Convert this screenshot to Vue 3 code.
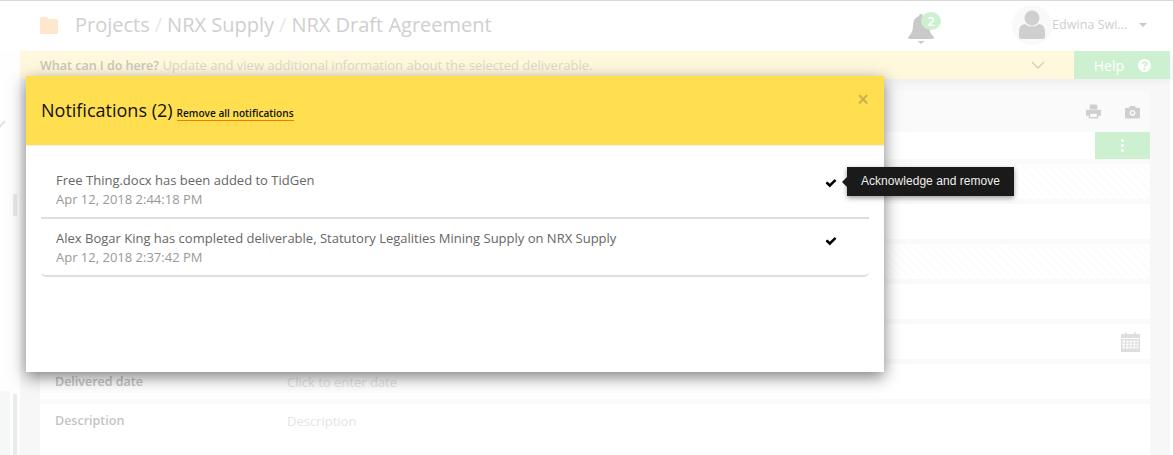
<template>
  <div class="page">
    <header class="topbar">
      <div class="crumbs">
        <svg class="folder" viewBox="0 0 18 18"><path d="M0 3 Q0 1 2 1 H6 Q8 1 8 3 H16 Q18 3 18 5 V18 H0 Z" /></svg>
        <span>Projects</span><i>/</i><span>NRX Supply</span><i>/</i><span>NRX Draft Agreement</span>
      </div>
      <div class="bell">
        <svg viewBox="0 0 28 32" width="28" height="32">
          <path d="M14 1 Q16 1 16 3 Q22 5 22 13 Q22 20 27 24 Q27 26 25 26 H3 Q1 26 1 24 Q6 20 6 13 Q6 5 12 3 Q12 1 14 1 Z" />
          <path d="M10.500 28 H17.500 L14 31 Z" />
        </svg>
        <span class="count">2</span>
      </div>
      <div class="user">
        <span class="avatar">
          <svg viewBox="0 0 26 30" width="26" height="30"><circle cx="13" cy="8" r="7.500" /><path d="M0 27 V21 Q0 15 6 14 Q13 19 20 14 Q26 15 26 21 V27 Q26 29 23 29 H3 Q0 29 0 27 Z" /></svg>
        </span>
        <span class="name">Edwina Swi...</span>
        <span class="caret"></span>
      </div>
    </header>

    <div class="main">
      <aside class="side">
        <span class="side-chevron"></span>
        <span class="thumb thumb-a"></span>
        <div class="side-foot"><span class="thumb thumb-b"></span></div>
      </aside>
      <div class="work">
        <div class="helpbar">
          <div class="hint">
            <p><b>What can I do here?</b> Update and view additional information about the selected deliverable.</p>
            <svg viewBox="0 0 14 8" width="14" height="8"><path d="M1 1 L7 7 L13 1" /></svg>
          </div>
          <div class="help">
            Help
            <svg viewBox="0 0 1536 1536" width="13" height="13"><path d="M896 1248v-192q0-14-9-23t-23-9H672q-14 0-23 9t-9 23v192q0 14 9 23t23 9h192q14 0 23-9t9-23zm256-672q0-88-55.500-163T958 297t-170-41q-243 0-371 213-15 24 8 42l132 100q7 6 19 6 16 0 25-12 53-68 86-92 34-24 86-24 48 0 85.500 26t37.500 59q0 38-20 61t-68 45q-63 28-115.500 86.500T640 829v36q0 14 9 23t23 9h192q14 0 23-9t9-23q0-19 21.500-49.500T972 766q32-18 49-28.500t46-35 44.500-48 28-60.500 12.500-81zm384 192q0 209-103 385.500T1153.500 1433 768 1536t-385.500-103T103 1153.500 0 768t103-385.500T382.500 103 768 0t385.500 103T1433 382.500 1536 768z" /></svg>
          </div>
        </div>
        <section class="panel">
          <div class="tools">
            <svg viewBox="0 0 16 15" width="15" height="15"><path d="M4 0 H11 L12 1 V5 H4 Z M1 5.500 H15 Q16 5.500 16 7 V12 H13 V15 H3 V12 H0 V7 Q0 5.500 1 5.500 Z" /><path class="hole" d="M4.500 10 H11.500 V13.500 H4.500 Z" /></svg>
            <svg viewBox="0 0 16 14" width="15" height="14"><path d="M1.500 2.500 H4.500 L5.500 0.500 H10.500 L11.500 2.500 H14.500 Q16 2.500 16 4 V12.500 Q16 14 14.500 14 H1.500 Q0 14 0 12.500 V4 Q0 2.500 1.500 2.500 Z" /><circle class="hole" cx="8" cy="8" r="3" /><circle cx="8" cy="8" r="1.500" /></svg>
          </div>
          <div class="actions">
            <span class="more"><i></i><i></i><i></i></span>
          </div>
          <div class="rows">
            <div v-for="row in rows" :key="row.id" class="row" :class="{ striped: row.striped }">
              <span class="label">{{ row.label }}</span>
              <span class="value">{{ row.value }}</span>
              <svg v-if="row.calendar" class="cal" viewBox="0 0 19 20" width="19" height="20">
                <path d="M1 2 H18 Q19 2 19 3 V6 H0 V3 Q0 2 1 2 Z M4 0.500 H6 V2 H4 Z M13 0.500 H15 V2 H13 Z" />
                <path fill-rule="evenodd" d="M0 7 H19 V20 H0 Z M1.500 8.500 V10.500 H4 V8.500 Z M5 8.500 V10.500 H7.500 V8.500 Z M8.500 8.500 V10.500 H11 V8.500 Z M12 8.500 V10.500 H14.500 V8.500 Z M15.500 8.500 V10.500 H17.500 V8.500 Z M1.500 11.500 V13.500 H4 V11.500 Z M5 11.500 V13.500 H7.500 V11.500 Z M8.500 11.500 V13.500 H11 V11.500 Z M12 11.500 V13.500 H14.500 V11.500 Z M15.500 11.500 V13.500 H17.500 V11.500 Z M1.500 14.500 V16.500 H4 V14.500 Z M5 14.500 V16.500 H7.500 V14.500 Z M8.500 14.500 V16.500 H11 V14.500 Z M12 14.500 V16.500 H14.500 V14.500 Z M15.500 14.500 V16.500 H17.500 V14.500 Z" />
              </svg>
            </div>
          </div>
        </section>
      </div>
    </div>

    <div class="modal">
      <div class="modal-head">
        <h2>Notifications ({{ notifications.length }})</h2>
        <a class="remove-all">Remove all notifications</a>
        <span class="close">×</span>
      </div>
      <ul class="list">
        <li v-for="note in notifications" :key="note.id">
          <div class="note-text">
            <div>{{ note.text }}</div>
            <small>{{ note.time }}</small>
          </div>
          <svg class="check" viewBox="0 0 1792 1792" width="12" height="12"><path d="M1671 566q0 40-28 68l-724 724-136 136q-28 28-68 28t-68-28l-136-136-362-362q-28-28-28-68t28-68l136-136q28-28 68-28t68 28l294 295 656-657q28-28 68-28t68 28l136 136q28 28 28 68z" /></svg>
        </li>
      </ul>
    </div>

    <div class="tooltip">Acknowledge and remove</div>
  </div>
</template>

<script setup>
const rows = [
  { id: 1, label: '', value: '', striped: true },
  { id: 2, label: '', value: '' },
  { id: 3, label: '', value: '', striped: true },
  { id: 4, label: '', value: '' },
  { id: 5, label: '', value: '', calendar: true },
  { id: 6, label: 'Delivered date', value: 'Click to enter date' },
  { id: 7, label: 'Description', value: 'Description' }
]

const notifications = [
  { id: 1, text: 'Free Thing.docx has been added to TidGen', time: 'Apr 12, 2018 2:44:18 PM' },
  { id: 2, text: 'Alex Bogar King has completed deliverable, Statutory Legalities Mining Supply on NRX Supply', time: 'Apr 12, 2018 2:37:42 PM' }
]
</script>

<style>
html, body { margin: 0; background: #fff; overflow: hidden; }
</style>

<style scoped>
.page { position: relative; width: 1173px; height: 455px; overflow: hidden; background: #fefefe; font-family: "Open Sans", sans-serif; font-size: 13px; color: #555; }

.topbar { display: flex; align-items: center; height: 51px; padding-bottom: 3px; box-sizing: border-box; border-top: 1px solid #d8d8d8; background: #fff; }
.crumbs { display: flex; align-items: center; padding-left: 40px; font-size: 20px; color: #cfcfcf; flex: 1; }
.crumbs i { font-style: normal; color: #e8e8e8; margin: 0 5px; }
.folder { width: 18px; height: 18px; margin-right: 17px; fill: #ffe7cd; }
.bell { position: relative; width: 40px; height: 40px; margin-right: 65px; }
.bell svg { position: absolute; left: 0; top: 8px; fill: #c9c9c9; }
.count { position: absolute; left: 14px; top: 7px; width: 20px; height: 18px; line-height: 18px; border-radius: 50%; background: #cdf0d0; color: #fff; font-size: 13px; font-weight: 600; text-align: center; }
.user { display: flex; align-items: center; width: 161px; }
.avatar { display: flex; align-items: center; justify-content: center; width: 40px; height: 40px; border-radius: 50%; background: #f9f9f9; fill: #cfcfcf; }
.name { color: #cecece; font-size: 12.600px; }
.caret { margin-left: 12px; border: 4px solid transparent; border-top: 4px solid #c9c9c9; margin-top: 4px; }

.main { display: flex; height: 404px; }
.side { position: relative; width: 20px; flex: none; background: #fefefe; }
.side-chevron { position: absolute; left: -4px; top: 67px; width: 6px; height: 6px; border-right: 2px solid #e2e2e2; border-bottom: 2px solid #e2e2e2; transform: rotate(45deg); }
.thumb { position: absolute; left: 13px; width: 4px; background: #eaeaea; }
.thumb-a { top: 143px; height: 22px; }
.side-foot { position: absolute; left: 0; top: 340px; width: 10px; height: 64px; background: #f6f8f8; }
.thumb-b { top: 3px; height: 61px; }

.work { width: 1150px; flex: none; background: #f7f7f7; }
.helpbar { display: flex; height: 28px; box-shadow: 0 3px 6px rgba(0, 0, 0, 0.04); }
.hint { flex: 1; display: flex; align-items: center; justify-content: space-between; padding: 0 29px 0 20px; background: #fff8dc; color: #dcd9cb; }
.hint p { margin: 0; }
.hint b { color: #c9c7bb; font-size: 12.500px; font-weight: 600; }
.hint svg { fill: none; stroke: #cfcdc2; stroke-width: 1.300; }
.help { width: 96px; display: flex; align-items: center; justify-content: flex-end; gap: 14px; padding-right: 19px; box-sizing: border-box; background: #cdf0d0; color: #fff; font-size: 14px; }
.help svg { fill: #fff; }

.panel { margin: 12px 20px 0; height: 364px; background: #fafafa; }
.tools { display: flex; justify-content: flex-end; align-items: center; gap: 24px; height: 41px; padding-right: 10px; fill: #cfcfcf; }
.hole { fill: #fafafa; }
.actions { display: flex; justify-content: flex-end; height: 27px; background: #fff; }
.more { display: flex; flex-direction: column; align-items: center; justify-content: center; gap: 2px; width: 55px; background: #cdf0d0; }
.more i { width: 3px; height: 3px; border-radius: 50%; background: #fff; }
.rows { display: flex; flex-direction: column; gap: 5px; margin-top: 5px; }
.row { display: flex; align-items: center; height: 35px; background: #fff; }
.row:last-child { height: 60px; align-items: flex-start; padding-top: 8px; }
.striped { background: repeating-linear-gradient(45deg, #fff, #fff 3px, #fdfdfd 3px, #fdfdfd 6px); }
.label { width: 232px; margin-left: 15px; color: #c4c4c4; font-size: 12.500px; font-weight: 600; }
.value { color: #e4e4e4; flex: 1; }
.cal { margin-right: 10px; fill: #dedede; }

.modal { position: absolute; left: 26px; top: 76px; width: 858px; height: 296px; background: #fff; box-shadow: 0 5px 15px rgba(0, 0, 0, 0.5); }
.modal-head { position: relative; display: flex; align-items: baseline; gap: 4px; height: 70px; padding: 23px 15px 0; box-sizing: border-box; background: #ffdf50; color: #111; border-bottom: 1px solid #f1f1f1; }
.modal-head h2 { margin: 0; font-size: 18px; font-weight: 400; line-height: 22px; }
.remove-all { font-size: 10.100px; font-weight: 600; line-height: 13px; border-bottom: 1px solid #f57c00; }
.close { position: absolute; right: 15px; top: 12px; font-size: 21px; line-height: 22px; color: #c9b04a; font-weight: 600; }
.list { list-style: none; margin: 15px 15px 0; padding: 0; }
.list li { display: flex; justify-content: space-between; align-items: flex-start; height: 58px; padding: 10px 32px 0 15px; box-sizing: border-box; border-bottom: 2px solid #dedede; color: #666; line-height: 19px; }
.list li:last-child { border-radius: 0 0 5px 5px; }
.note-text small { display: block; font-size: 13px; color: #999; }
.check { margin-top: 6px; fill: #000; }

.tooltip { position: absolute; left: 847px; top: 167px; width: 167px; height: 29px; line-height: 29px; text-align: center; background: #1a1a1a; color: #eee; font-family: "Liberation Sans", Arial, sans-serif; font-size: 12px; letter-spacing: 0.05px; box-shadow: 0 2px 5px rgba(0, 0, 0, 0.4); }
.tooltip::before { content: ""; position: absolute; left: -5px; top: 10px; border: 5px solid transparent; border-left: 0; border-right-color: #1a1a1a; }
</style>
